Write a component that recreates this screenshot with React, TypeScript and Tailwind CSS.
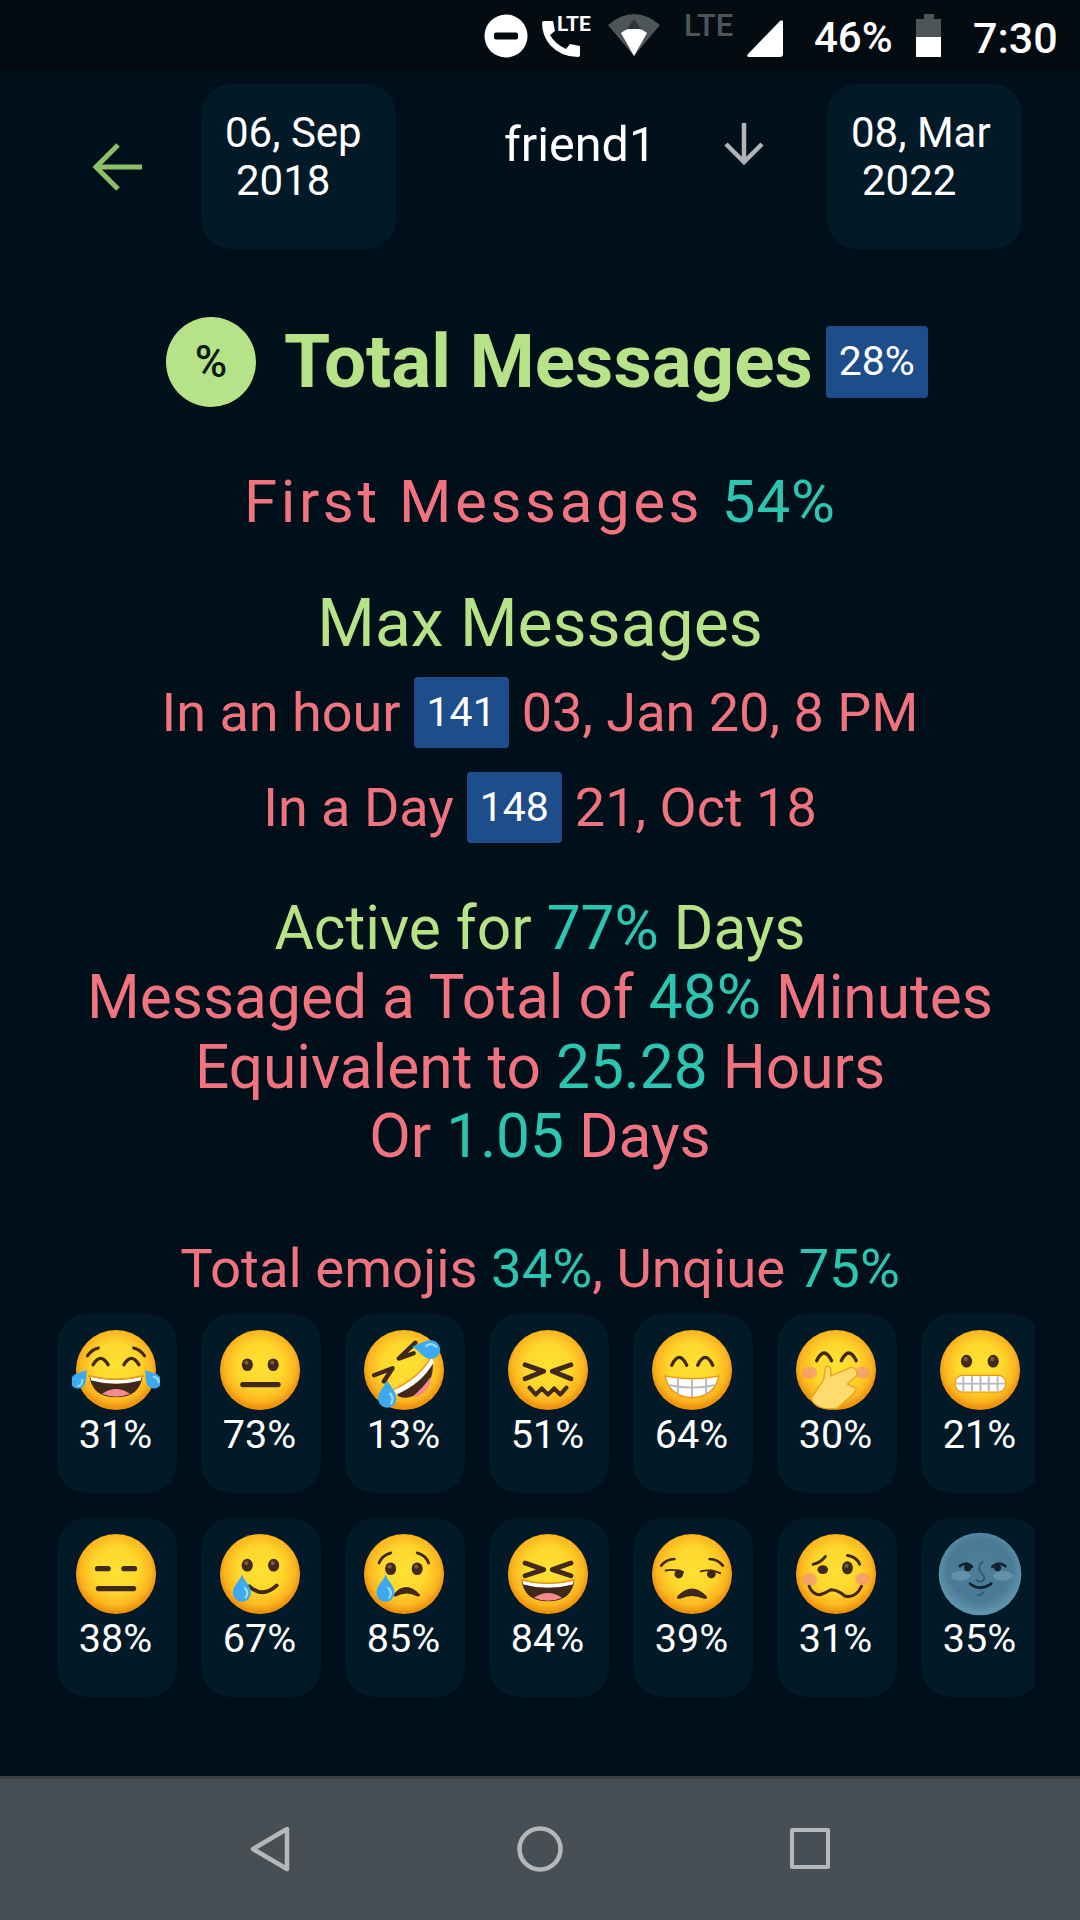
import React from 'react';

const INK = '#40291a';

function Face({ id, children }: { id: string; children?: React.ReactNode }) {
  return (
    <svg width="88" height="88" viewBox="0 0 100 100" className="shrink-0">
      <defs>
        <radialGradient id={id} cx="50%" cy="45%" r="52%">
          <stop offset="0%" stopColor="#fee133" />
          <stop offset="55%" stopColor="#fed72c" />
          <stop offset="85%" stopColor="#fbb61f" />
          <stop offset="100%" stopColor="#ee930f" />
        </radialGradient>
      </defs>
      <circle cx="50" cy="50" r="45.5" fill={`url(#${id})`} />
      {children}
    </svg>
  );
}

function Arc({ x, y, w = 17, h = 10 }: { x: number; y: number; w?: number; h?: number }) {
  return <path d={`M${x} ${y} Q${x + w / 2} ${y - h * 1.6} ${x + w} ${y}`} fill="none" stroke={INK} strokeWidth="3.8" strokeLinecap="round" />;
}

function Dot({ x, y, rx = 6.3, ry = 7.2 }: { x: number; y: number; rx?: number; ry?: number }) {
  return (
    <g>
      <ellipse cx={x} cy={y} rx={rx} ry={ry} fill={INK} />
      <ellipse cx={x - 1} cy={y - 2.4} rx={rx * 0.38} ry={ry * 0.35} fill="#7a5a3c" />
    </g>
  );
}

function Squint({ top = 44, tip = 51.5, bottom = 60 }: { top?: number; tip?: number; bottom?: number }) {
  return (
    <g fill="none" stroke={INK} strokeWidth="5.6" strokeLinecap="round" strokeLinejoin="round">
      <path d={`M24 ${top} L45 ${tip} L24 ${bottom}`} />
      <path d={`M76 ${top} L55 ${tip} L76 ${bottom}`} />
    </g>
  );
}

function Laugh({ y = 57 }: { y?: number }) {
  return (
    <g>
      <path d={`M20 ${y} Q50 ${y + 8} 80 ${y} Q77 ${y + 24} 50 ${y + 24} Q23 ${y + 24} 20 ${y}Z`} fill={INK} />
      <path d={`M20.5 ${y + 0.5} Q50 ${y + 8} 79.5 ${y + 0.5} L78 ${y + 5} Q50 ${y + 12.5} 22 ${y + 5}Z`} fill="#fff" />
      <path d={`M19 ${y - 0.5} Q50 ${y + 7.5} 81 ${y - 0.5}`} fill="none" stroke="#ee930f" strokeWidth="1.6" />
      <path d={`M34 ${y + 20} Q50 ${y + 9} 66 ${y + 20} Q50 ${y + 27} 34 ${y + 20}Z`} fill="#f48a8f" />
    </g>
  );
}

function Tear({ x, y, s = 1, r = 0 }: { x: number; y: number; s?: number; r?: number }) {
  return (
    <g transform={`translate(${x} ${y}) rotate(${r}) scale(${s})`}>
      <path d="M0 -15 C3 -8 9.5 -3 9.5 4 A9.5 9.5 0 0 1 -9.5 4 C-9.5 -3 -3 -8 0 -15Z" fill="#3da9ee" />
      <path d="M3 -1 C6 2 6 6 4 9" fill="none" stroke="#9adcf8" strokeWidth="2.4" strokeLinecap="round" />
    </g>
  );
}

function Cheeks({ ly = 53, ry = 53 }: { ly?: number; ry?: number }) {
  return (
    <g fill="#f58f8a" opacity="0.65">
      <ellipse cx="20" cy={ly} rx="8.5" ry="7" />
      <ellipse cx="80" cy={ry} rx="8.5" ry="7" />
    </g>
  );
}

function Bar({ x, y, w, h = 6 }: { x: number; y: number; w: number; h?: number }) {
  return <rect x={x} y={y} width={w} height={h} rx={h / 2} fill={INK} />;
}

const emojis: { pct: string; art: React.ReactNode }[][] = [
  [
    {
      pct: '31%',
      art: (
        <Face id="f1">
          <Arc x={24} y={44} h={9} />
          <Arc x={59} y={44} h={9} />
          <path d="M17.5 34 Q22 27 30 25 M82.5 34 Q78 27 70 25" fill="none" stroke={INK} strokeWidth="3.4" strokeLinecap="round" />
          <Laugh y={57} />
          <Tear x={9} y={60} s={0.88} r={38} />
          <Tear x={91} y={60} s={0.88} r={-38} />
        </Face>
      ),
    },
    {
      pct: '73%',
      art: (
        <Face id="f2">
          <Dot x={35.6} y={44} />
          <Dot x={65} y={44} />
          <Bar x={27.5} y={63.5} w={46} />
        </Face>
      ),
    },
    {
      pct: '13%',
      art: (
        <Face id="f3">
          <path d="M38 72 Q66 62 82 36 Q86 60 70 74 Q56 85 44 80Z" fill={INK} />
          <path d="M38 72 Q66 60 81 35 L84 41 Q70 66 41 78Z" fill="#fff" />
          <path d="M38 72 Q66 60 81 35" fill="none" stroke="#ee930f" strokeWidth="1.6" />
          <path d="M60 80 Q72 70 80 58 Q82 68 72 76 Q66 81 60 80Z" fill="#f48a8f" />
          <path d="M63 19 L44 37 L61 31" fill="none" stroke={INK} strokeWidth="5" strokeLinecap="round" strokeLinejoin="round" />
          <path d="M16 56 L37 48 L27 63" fill="none" stroke={INK} strokeWidth="5" strokeLinecap="round" strokeLinejoin="round" />
          <Tear x={76} y={26} s={1.12} r={-80} />
          <Tear x={31} y={78} s={1.1} r={0} />
        </Face>
      ),
    },
    {
      pct: '51%',
      art: (
        <Face id="f4">
          <Squint />
          <path d="M29 70 L36 78 L43 71 L50 78 L57 71 L64 78 L71 70" fill="none" stroke={INK} strokeWidth="4.6" strokeLinecap="round" strokeLinejoin="round" />
        </Face>
      ),
    },
    {
      pct: '64%',
      art: (
        <Face id="f5">
          <Arc x={27} y={44.5} h={11} />
          <Arc x={56.5} y={44.5} h={11} />
          <path d="M19.5 57 Q50 63 80.5 57 Q76 80 50 81.5 Q24 80 19.5 57Z" fill="#fff" stroke="#ee930f" strokeWidth="1.6" />
          <path d="M34 60 V78 M50 61 V81 M66 60 V78 M23 67 Q50 73 77 67" fill="none" stroke="#b9b9b9" strokeWidth="2.2" />
        </Face>
      ),
    },
    {
      pct: '30%',
      art: (
        <Face id="f6">
          <Arc x={28} y={39.5} h={11} />
          <Arc x={56} y={39.5} h={11} />
          <Cheeks />
          <path d="M22 82 L36 61 L38 47 Q41 44 44 48 L44 57 L67 47 Q74 47 74 56 L63 66 L73 71 Q72 77 61 85 L52 93 Q40 96 31 92 Q23 88 22 82Z" fill="#fedb6e" stroke="#eea320" strokeWidth="1.6" strokeLinejoin="round" />
        </Face>
      ),
    },
    {
      pct: '21%',
      art: (
        <Face id="f7">
          <Dot x={34.7} y={40} />
          <Dot x={65} y={40} />
          <rect x="22" y="56" width="57" height="19" rx="8" fill="#fff" stroke="#ee930f" strokeWidth="1.4" />
          <path d="M31 57 V74 M41 57 V74 M50.5 57 V74 M60 57 V74 M70 57 V74 M23 65.5 H78" stroke="#b9b9b9" strokeWidth="2.2" />
        </Face>
      ),
    },
  ],
  [
    {
      pct: '38%',
      art: (
        <Face id="f8">
          <Bar x={26} y={41} w={18} />
          <Bar x={56} y={41} w={18} />
          <Bar x={27} y={63.5} w={46} />
        </Face>
      ),
    },
    {
      pct: '67%',
      art: (
        <Face id="f9">
          <Dot x={35.5} y={40} />
          <Dot x={65.5} y={40} />
          <path d="M38 64 Q53 78 69 63" fill="none" stroke={INK} strokeWidth="4.2" strokeLinecap="round" />
          <Tear x={29.5} y={67} s={1.08} />
        </Face>
      ),
    },
    {
      pct: '85%',
      art: (
        <Face id="f10">
          <Dot x={34.8} y={44} />
          <Dot x={65} y={44} />
          <path d="M21.6 37.5 Q25 29 35 26 M78 37.5 Q75 29 65 26" fill="none" stroke={INK} strokeWidth="3.2" strokeLinecap="round" />
          <path d="M39 73.5 Q52 58 67 73.5 Q68 75 65 74.5 Q53 68 41 74.5 Q38 75 39 73.5Z" fill={INK} stroke={INK} strokeWidth="1.8" />
          <Tear x={29} y={67} s={1.08} />
        </Face>
      ),
    },
    {
      pct: '84%',
      art: (
        <Face id="f11">
          <Squint top={37.5} tip={45} bottom={52} />
          <Laugh y={57} />
        </Face>
      ),
    },
    {
      pct: '39%',
      art: (
        <Face id="f12">
          <path d="M15 40.5 Q21 33 30 33 M85 40.5 Q79 33 70 33" fill="none" stroke={INK} strokeWidth="3" strokeLinecap="round" />
          <path d="M20 46 Q30 44 40 48 M60 47 Q72 44 82 49" fill="none" stroke={INK} strokeWidth="2.2" strokeLinecap="round" />
          <circle cx="35" cy="50" r="5" fill={INK} />
          <circle cx="72" cy="50" r="5" fill={INK} />
          <path d="M34 76 Q50 59 66 76 Q67 78 63 77 Q50 71 37 77 Q33 78 34 76Z" fill={INK} stroke={INK} strokeWidth="1.8" />
        </Face>
      ),
    },
    {
      pct: '31%',
      art: (
        <Face id="f13">
          <Cheeks ly={56} ry={55.6} />
          <path d="M24 39 Q33 37 38 30 M63 29 Q73 30 77 39" fill="none" stroke={INK} strokeWidth="3.2" strokeLinecap="round" />
          <ellipse cx="35" cy="45" rx="6" ry="5" fill={INK} />
          <Dot x={63} y={43} rx={6.2} ry={7.4} />
          <path d="M19.5 64 Q24 74 32 73.5 Q38 72 44 68 Q52 68 60 75 Q72 78 79 64" fill="none" stroke={INK} strokeWidth="3.4" strokeLinecap="round" />
        </Face>
      ),
    },
    {
      pct: '35%',
      art: (
        <svg width="88" height="88" viewBox="0 0 100 100" className="shrink-0">
          <defs>
            <radialGradient id="moon" cx="50%" cy="45%" r="52%">
              <stop offset="0%" stopColor="#4d7f9b" />
              <stop offset="72%" stopColor="#497a96" />
              <stop offset="100%" stopColor="#5f94ad" />
            </radialGradient>
          </defs>
          <circle cx="50" cy="50" r="47" fill="url(#moon)" />
          <ellipse cx="28" cy="52" rx="11" ry="5.5" fill="#86adc2" opacity="0.45" />
          <ellipse cx="76" cy="52" rx="11" ry="5.5" fill="#86adc2" opacity="0.45" />
          <path d="M27 41 Q35 35 41 42 M64 42 Q71 35 79 41" fill="none" stroke="#10222e" strokeWidth="3" strokeLinecap="round" />
          <circle cx="36" cy="43" r="4" fill="#10222e" />
          <circle cx="70" cy="43" r="4" fill="#10222e" />
          <path d="M53 36 Q47 41 50 47 Q57 53 54 57 Q50 60 46 57" fill="none" stroke="#2e5a74" strokeWidth="2.2" strokeLinecap="round" />
          <path d="M38.6 61 Q50 70 63 61" fill="none" stroke="#10222e" strokeWidth="3" strokeLinecap="round" />
          <path d="M47 74 Q51 75 54 71" fill="none" stroke="#2e5a74" strokeWidth="2.4" strokeLinecap="round" />
        </svg>
      ),
    },
  ],
];

function DateCard({ top, bottom }: { top: string; bottom: string }) {
  return (
    <div className="w-[195px] h-[165px] shrink-0 rounded-[30px] bg-[#021a27] pl-[24px] pt-[25px] text-[42px] leading-[48px] text-white">
      <div>{top}</div>
      <div className="pl-[11px]">{bottom}</div>
    </div>
  );
}

function Badge({ children }: { children: React.ReactNode }) {
  return (
    <span className="inline-flex items-center justify-center rounded-[4px] bg-[#1d4d8a] text-white">{children}</span>
  );
}

export default function App() {
  return (
    <div className="w-[1080px] h-[1920px] flex flex-col overflow-hidden bg-[#00101a] font-['Roboto',sans-serif]">
      {/* status bar */}
      <div className="h-[70px] shrink-0 bg-[#040b11] flex items-start">
        <svg width="44" height="44" viewBox="0 0 44 44" className="ml-[484px] mt-[14px]">
          <circle cx="22" cy="22" r="21.5" fill="#fff" />
          <rect x="10" y="18.5" width="24" height="7" rx="2" fill="#040b11" />
        </svg>
        <div className="relative ml-[13px] mt-[14px] w-[56px] h-[44px]">
          <svg width="40" height="38" viewBox="0 0 40 38" className="absolute left-0 top-[6px]">
            <path d="M1 3 Q1 1 3 1 L12 1 L14 11 L9 15 Q14 24 25 29 L29 24 L39 26 L39 35 Q39 37 37 37 Q20 37 9 25 Q1 15 1 3Z" fill="#fff" />
          </svg>
          <span className="absolute left-[16px] top-[-1px] text-[21px] leading-[22px] font-bold text-white">LTE</span>
        </div>
        <svg width="52" height="42" viewBox="0 0 52 42" className="ml-[11px] mt-[14px]">
          <path d="M0 11 Q26 -11 52 11 L26 42Z" fill="#4e5559" />
          <path d="M13 19 Q26 9 39 19 L26 42Z" fill="#fff" />
          <path d="M26 5 L33 15 L19 15Z" fill="#2f3438" />
        </svg>
        <span className="ml-[24px] mt-[11px] w-[50px] text-[31px] leading-[30px] font-medium text-[#4e5559]">LTE</span>
        <svg width="37" height="37" viewBox="0 0 37 37" className="ml-[12px] mt-[20px]">
          <path d="M37 2 V34 Q37 37 34 37 H3 Q0 37 2 34 L34 1 Q37 -1 37 2Z" fill="#fff" />
        </svg>
        <span className="ml-[31px] mt-[15px] w-[78px] text-[42px] leading-[46px] font-medium text-white">46%</span>
        <div className="ml-[24px] mt-[14px] w-[25px] h-[43px] flex flex-col items-center">
          <div className="w-[10px] h-[5px] bg-[#4e5559]" />
          <div className="w-[25px] h-[18px] bg-[#4e5559]" />
          <div className="w-[25px] h-[20px] bg-white" />
        </div>
        <span className="ml-[32px] mt-[15px] text-[43px] leading-[46px] font-medium text-white">7:30</span>
      </div>

      {/* header */}
      <div className="mt-[14px] flex items-start pl-[92px] h-[165px]">
        <svg width="50" height="48" viewBox="0 0 50 48" className="mt-[59px] shrink-0" fill="none" stroke="#8cbf6a" strokeWidth="5">
          <path d="M26 2 L4 24 L26 46 M4 24 H50" />
        </svg>
        <div className="ml-[59px]">
          <DateCard top="06, Sep" bottom="2018" />
        </div>
        <span className="ml-[108px] mt-[34px] w-[220px] text-[48.5px] leading-[54px] text-white">friend1</span>
        <svg width="40" height="42" viewBox="0 0 40 42" className="mt-[39px] shrink-0" fill="none" stroke="#b1b5b7" strokeWidth="4.5">
          <path d="M20 0 V39 M2 21 L20 39 L38 21" />
        </svg>
        <div className="ml-[63px]">
          <DateCard top="08, Mar" bottom="2022" />
        </div>
      </div>

      {/* total messages */}
      <div className="mt-[68px] pl-[166px] flex items-center h-[90px]">
        <div className="w-[90px] h-[90px] rounded-full bg-[#b6e388] flex items-center justify-center text-[#0a1a12] text-[44px] font-medium">%</div>
        <span className="ml-[28px] text-[74.6px] leading-[90px] font-bold text-[#b6e388]">Total Messages</span>
        <div className="ml-[13px] w-[102px] h-[72px] flex">
          <Badge><span className="w-[102px] h-[72px] flex items-center justify-center text-[41px]">28%</span></Badge>
        </div>
      </div>

      <div className="mt-[61px] text-center text-[60px] leading-[68px] tracking-[3.6px] text-[#f1737f]">
        First Messages <span className="tracking-[1px] text-[#2cc5b2]">54%</span>
      </div>

      <div className="mt-[53px] text-center text-[66px] leading-[70px] text-[#b6e388]">Max Messages</div>

      <div className="mt-[18px] flex items-center justify-center gap-[13px] h-[71px] text-[54px] text-[#f1737f]">
        <span>In an hour</span>
        <Badge><span className="w-[95px] h-[71px] flex items-center justify-center text-[41px]">141</span></Badge>
        <span>03, Jan 20, 8 PM</span>
      </div>

      <div className="mt-[24px] flex items-center justify-center gap-[13px] h-[71px] text-[54px] text-[#f1737f]">
        <span>In a Day</span>
        <Badge><span className="w-[95px] h-[71px] flex items-center justify-center text-[41px]">148</span></Badge>
        <span>21, Oct 18</span>
      </div>

      <div className="mt-[51px] text-center text-[60.4px] leading-[69.3px] text-[#f1737f]">
        <div className="text-[#b6e388]">Active for <span className="text-[#2cc5b2]">77%</span> Days</div>
        <div>Messaged a Total of <span className="text-[#2cc5b2]">48%</span> Minutes</div>
        <div>Equivalent to <span className="text-[#2cc5b2]">25.28</span> Hours</div>
        <div>Or <span className="text-[#2cc5b2]">1.05</span> Days</div>
      </div>

      <div className="mt-[67px] text-center text-[54.5px] leading-[60px] text-[#f1737f]">
        Total emojis <span className="text-[#2cc5b2]">34%</span>, Unqiue <span className="text-[#2cc5b2]">75%</span>
      </div>

      {/* emoji rows */}
      <div className="mt-[16px] ml-[57px] w-[978px] flex flex-col gap-[25px] overflow-hidden">
        {emojis.map((row, i) => (
          <div key={i} className="flex gap-[24px]">
            {row.map((e, j) => (
              <div key={j} className="w-[120px] h-[179px] shrink-0 rounded-[30px] bg-[#021a27] flex flex-col items-center pt-[12px] pr-[3px]">
                {e.art}
                <span className="text-[39.5px] leading-[42px] text-white">{e.pct}</span>
              </div>
            ))}
          </div>
        ))}
      </div>

      {/* nav bar */}
      <div className="mt-auto h-[144px] shrink-0 bg-[#474f55] border-t-[3px] border-[#3a4044]">
        <div className="flex h-full items-center">
          <svg width="40" height="46" viewBox="0 0 40 46" className="ml-[250px] mt-[-2px]" fill="none" stroke="#b4b8ba" strokeWidth="4.5" strokeLinejoin="round">
            <path d="M37 3 L3 23 L37 43Z" />
          </svg>
          <svg width="46" height="46" viewBox="0 0 46 46" className="ml-[227px] mt-[-2px]" fill="none" stroke="#b4b8ba" strokeWidth="4.5">
            <circle cx="23" cy="23" r="20.5" />
          </svg>
          <div className="ml-[227px] mt-[-2px] w-[40px] h-[41px] rounded-[2px] border-[4.5px] border-[#b4b8ba]" />
        </div>
      </div>
    </div>
  );
}
